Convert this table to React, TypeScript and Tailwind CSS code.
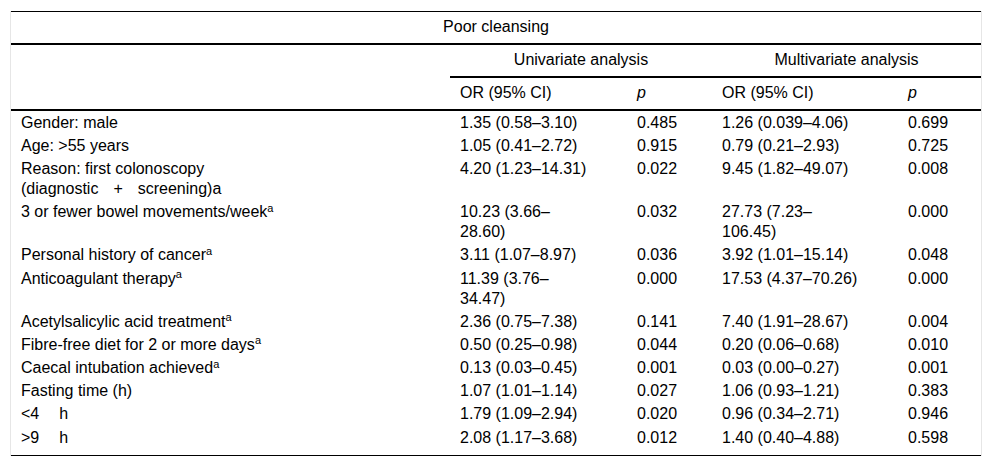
import React from 'react';

type Row = {
  label: React.ReactNode;
  or1: React.ReactNode;
  p1: string;
  or2: React.ReactNode;
  p2: string;
};

const Sup = () => <sup className="text-[11px] leading-none">a</sup>;

const rows: Row[] = [
  { label: 'Gender: male', or1: '1.35 (0.58–3.10)', p1: '0.485', or2: '1.26 (0.039–4.06)', p2: '0.699' },
  { label: 'Age: >55 years', or1: '1.05 (0.41–2.72)', p1: '0.915', or2: '0.79 (0.21–2.93)', p2: '0.725' },
  {
    label: (
      <>
        Reason: first colonoscopy
        <br />
        (diagnostic<span className="mx-[15px]">+</span>screening)a
      </>
    ),
    or1: '4.20 (1.23–14.31)',
    p1: '0.022',
    or2: '9.45 (1.82–49.07)',
    p2: '0.008',
  },
  {
    label: (
      <>
        3 or fewer bowel movements/week<Sup />
      </>
    ),
    or1: (
      <>
        10.23 (3.66–
        <br />
        28.60)
      </>
    ),
    p1: '0.032',
    or2: (
      <>
        27.73 (7.23–
        <br />
        106.45)
      </>
    ),
    p2: '0.000',
  },
  {
    label: (
      <>
        Personal history of cancer<Sup />
      </>
    ),
    or1: '3.11 (1.07–8.97)',
    p1: '0.036',
    or2: '3.92 (1.01–15.14)',
    p2: '0.048',
  },
  {
    label: (
      <>
        Anticoagulant therapy<Sup />
      </>
    ),
    or1: (
      <>
        11.39 (3.76–
        <br />
        34.47)
      </>
    ),
    p1: '0.000',
    or2: '17.53 (4.37–70.26)',
    p2: '0.000',
  },
  {
    label: (
      <>
        Acetylsalicylic acid treatment<Sup />
      </>
    ),
    or1: '2.36 (0.75–7.38)',
    p1: '0.141',
    or2: '7.40 (1.91–28.67)',
    p2: '0.004',
  },
  {
    label: (
      <>
        Fibre-free diet for 2 or more days<Sup />
      </>
    ),
    or1: '0.50 (0.25–0.98)',
    p1: '0.044',
    or2: '0.20 (0.06–0.68)',
    p2: '0.010',
  },
  {
    label: (
      <>
        Caecal intubation achieved<Sup />
      </>
    ),
    or1: '0.13 (0.03–0.45)',
    p1: '0.001',
    or2: '0.03 (0.00–0.27)',
    p2: '0.001',
  },
  { label: 'Fasting time (h)', or1: '1.07 (1.01–1.14)', p1: '0.027', or2: '1.06 (0.93–1.21)', p2: '0.383' },
  {
    label: (
      <>
        &lt;4<span className="ml-[20px]">h</span>
      </>
    ),
    or1: '1.79 (1.09–2.94)',
    p1: '0.020',
    or2: '0.96 (0.34–2.71)',
    p2: '0.946',
  },
  {
    label: (
      <>
        &gt;9<span className="ml-[20px]">h</span>
      </>
    ),
    or1: '2.08 (1.17–3.68)',
    p1: '0.012',
    or2: '1.40 (0.40–4.88)',
    p2: '0.598',
  },
];

export default function App() {
  return (
    <div className="w-[992px] h-[467px] bg-white text-black font-['Liberation_Sans',Arial,sans-serif] text-[16px] leading-5">
      <div className="mt-[11px] ml-[10px] w-[972px] border-x border-[#e6e6e6]">
        <table className="w-full border-separate border-spacing-0 border-y border-black table-fixed">
          <colgroup>
            <col className="w-[439px]" />
            <col className="w-[177px]" />
            <col className="w-[85px]" />
            <col className="w-[186px]" />
            <col className="w-[83px]" />
          </colgroup>
          <thead>
            <tr>
              <th colSpan={5} className="font-normal text-center pt-[4.5px] pb-[6.5px] border-b-2 border-black">
                Poor cleansing
              </th>
            </tr>
            <tr>
              <th className="py-[5.5px]"></th>
              <th colSpan={2} className="font-normal text-center pt-[4.5px] pb-[6.5px] border-b-2 border-black">
                Univariate analysis
              </th>
              <th colSpan={2} className="font-normal text-center pt-[4.5px] pb-[6.5px] border-b-2 border-black">
                Multivariate analysis
              </th>
            </tr>
            <tr>
              <th className="py-[5.5px] border-b-2 border-black"></th>
              <th className="font-normal text-left px-[10px] pt-[4.5px] pb-[6.5px] border-b-2 border-black">OR (95% CI)</th>
              <th className="font-normal italic text-left px-[10px] pt-[4.5px] pb-[6.5px] border-b-2 border-black">p</th>
              <th className="font-normal text-left px-[10px] pt-[4.5px] pb-[6.5px] border-b-2 border-black">OR (95% CI)</th>
              <th className="font-normal italic text-left px-[10px] pt-[4.5px] pb-[6.5px] border-b-2 border-black">p</th>
            </tr>
          </thead>
          <tbody>
            {rows.map((r, i) => {
              const last = i === rows.length - 1;
              const pad = last ? 'pt-[1.6px] pb-[7px]' : 'py-[1.6px]';
              return (
                <tr key={i} className="align-top">
                  <td className={`px-[10px] ${pad}`}>{r.label}</td>
                  <td className={`px-[10px] ${pad}`}>{r.or1}</td>
                  <td className={`px-[10px] ${pad}`}>{r.p1}</td>
                  <td className={`px-[10px] ${pad}`}>{r.or2}</td>
                  <td className={`px-[10px] ${pad}`}>{r.p2}</td>
                </tr>
              );
            })}
          </tbody>
        </table>
      </div>
    </div>
  );
}
